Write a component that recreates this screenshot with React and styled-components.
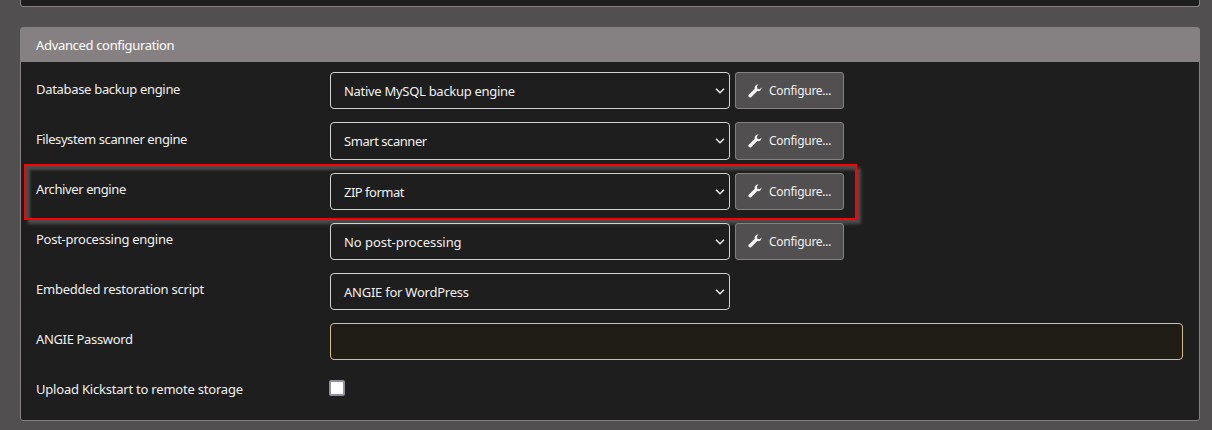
import React from "react";
import styled, { createGlobalStyle } from "styled-components";

const GlobalStyle = createGlobalStyle`
  * { box-sizing: border-box; }
  body {
    margin: 0;
    height: 430px;
    overflow: hidden;
    background: #514f50;
    color: #f0f0f0;
    font-family: "Noto Sans", "Open Sans", sans-serif;
    font-size: 13px;
  }
`;

const Page = styled.main`
  display: flex;
  flex-direction: column;
  gap: 20px;
  height: 430px;
  padding: 0 12px 9px 20px;
`;

const PanelAbove = styled.section`
  flex: none;
  height: 7px;
  background: #1e1e1e;
  border: 1px solid #858182;
  border-top: 0;
  border-radius: 0 0 3px 3px;
`;

const Panel = styled.section`
  flex: none;
  height: 394px;
  background: #1e1e1e;
  border: 1px solid #858182;
  border-radius: 3px;
`;

const PanelHeader = styled.h3`
  display: flex;
  align-items: center;
  height: 34px;
  margin: 0;
  padding: 0 15px 1px;
  background: #858182;
  color: #fff;
  font-size: 13px;
  font-weight: 400;
`;

const Text = styled.span`
  white-space: nowrap;
  letter-spacing: ${(p) => p.$track || 0}px;
`;

const Rows = styled.div`
  display: flex;
  flex-direction: column;
  gap: 13px;
  padding: 10.2px 16px 0 15px;
`;

const Row = styled.div`
  position: relative;
  display: flex;
  height: 37.2px;
`;

const Label = styled.label`
  flex: none;
  width: 294px;
  line-height: 18px;
  padding-top: ${(p) => (p.$compact ? 6.4 : 7.35)}px;
`;

const SelectBox = styled.div`
  flex: none;
  display: flex;
  align-items: center;
  justify-content: space-between;
  width: 400px;
  height: 37.2px;
  padding: 1px 4px 0 13px;
  border: 1px solid #d2d2d2;
  border-radius: 4px;
`;

const ConfigureButton = styled.button`
  flex: none;
  display: flex;
  align-items: center;
  gap: 7px;
  width: 109px;
  height: 37.2px;
  margin-left: 5px;
  padding: 0 0 0 12px;
  border: 1px solid #858182;
  border-radius: 3px;
  background: #514f50;
  color: #f0f0f0;
  font: 12px "Noto Sans", "Open Sans", sans-serif;
`;

const PasswordInput = styled.input`
  flex: 1;
  min-width: 0;
  height: 37.2px;
  border: 1px solid #d8bd8d;
  border-radius: 4px;
  background: #201c16;
`;

const CheckBox = styled.span`
  width: 16px;
  height: 16px;
  margin: 7px 0 0 -1px;
  border: 2px solid #8f8f9d;
  border-radius: 2px;
  background: #fff;
`;

const Highlight = styled.div`
  position: absolute;
  inset: -8.6px auto auto -12px;
  width: 833px;
  height: 56px;
  border: 2px solid #f00;
  box-shadow: 4px 4px 3px #4c4c4c, inset 4px 4px 3px #4c4c4c;
  pointer-events: none;
`;

const Chevron = () => (
  <svg width="10" height="8" viewBox="0 0 10 8" fill="none" stroke="#f0f0f0" strokeWidth="1.5">
    <path d="M1 1.8 5 5.8 9 1.8" />
  </svg>
);

const Wrench = () => (
  <svg width="14" height="14" viewBox="0 0 14 14">
    <path
      fill="#f4f4f4"
      d="M13.5 3.5c.1 2.5-1.9 4.2-4.2 3.6L3.4 13c-.7.7-1.7.8-2.5.1-.8-.8-.7-1.8 0-2.5l5.9-5.8C6.2 2.5 8 .5 10.5.6L8.900 2.300 9.300 4.700l2.400.5Z"
    />
  </svg>
);

const engines = [
  { label: "Database backup engine", track: -0.31, value: "Native MySQL backup engine", valueTrack: -0.29, configurable: true },
  { label: "Filesystem scanner engine", track: -0.42, value: "Smart scanner", valueTrack: -0.45, configurable: true },
  { label: "Archiver engine", track: -0.4, value: "ZIP format", valueTrack: -0.5, configurable: true, highlighted: true },
  { label: "Post-processing engine", track: -0.27, value: "No post-processing", valueTrack: -0.05, configurable: true },
  { label: "Embedded restoration script", track: -0.23, value: "ANGIE for WordPress", valueTrack: -0.24 },
];

export default function App() {
  return (
    <>
      <GlobalStyle />
      <Page>
        <PanelAbove />
        <Panel>
          <PanelHeader><Text $track={-0.33}>Advanced configuration</Text></PanelHeader>
          <Rows>
            {engines.map((e) => (
              <Row key={e.label}>
                <Label><Text $track={e.track}>{e.label}</Text></Label>
                <SelectBox>
                  <Text $track={e.valueTrack}>{e.value}</Text>
                  <Chevron />
                </SelectBox>
                {e.configurable && (
                  <ConfigureButton>
                    <Wrench />
                    <Text $track={-0.27}>Configure...</Text>
                  </ConfigureButton>
                )}
                {e.highlighted && <Highlight />}
              </Row>
            ))}
            <Row>
              <Label $compact><Text $track={-0.35}>ANGIE Password</Text></Label>
              <PasswordInput type="password" />
            </Row>
            <Row>
              <Label $compact><Text $track={-0.21}>Upload Kickstart to remote storage</Text></Label>
              <CheckBox role="checkbox" aria-checked="false" />
            </Row>
          </Rows>
        </Panel>
      </Page>
    </>
  );
}
